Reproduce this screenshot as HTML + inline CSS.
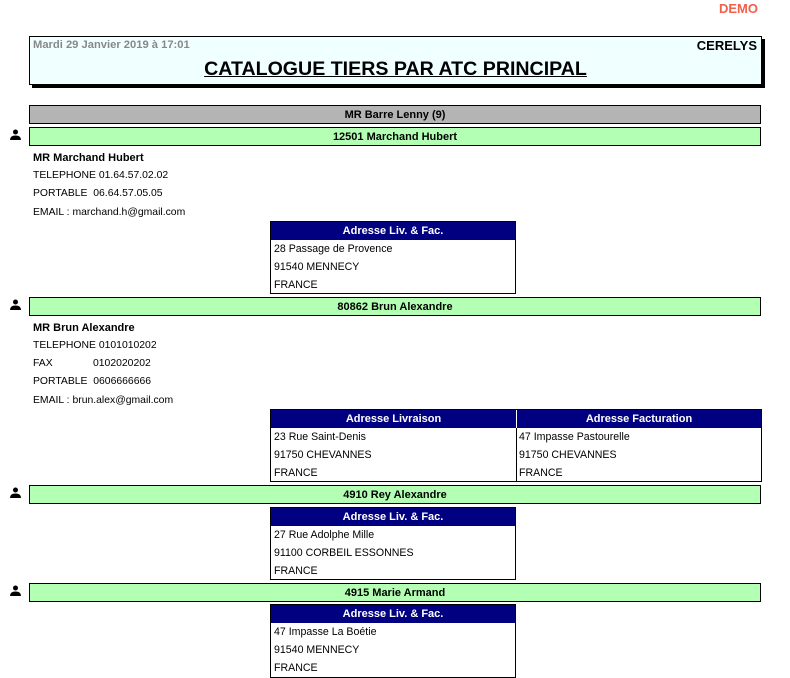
<!DOCTYPE html>
<html><head><meta charset="utf-8"><style>
body{margin:0;width:790px;height:678px;background:#fff;font-family:"Liberation Sans",Arial,sans-serif;position:relative;overflow:hidden}
div{position:absolute;box-sizing:border-box}
.t{font-size:11px;color:#000;white-space:nowrap}
.s{font-size:10.4px}
.bar{left:29px;width:732px;height:19px;border:1px solid #000;font-weight:bold;font-size:11px;text-align:center;line-height:19px}
.g{background:#b3ffb3}
.box{border:1px solid #000;background:#fff}
.hd{background:#000080;color:#fff;font-weight:bold;font-size:11px;text-align:center;height:18px;line-height:19px;position:absolute;top:0}
.ln{font-size:10.6px;position:absolute;left:3px;white-space:nowrap}
</style></head><body>
<div style="left:719px;top:1px;color:#f0604a;font-weight:bold;font-size:13px">DEMO</div>
<div style="left:29px;top:36px;width:733px;height:49px;background:#f0ffff;border:1px solid #000;box-shadow:3px 3px 0 #000"></div>
<div class="t" style="left:33px;top:39px;color:#888;font-weight:bold;font-size:11.2px">Mardi 29 Janvier 2019 à 17:01</div>
<div class="t" style="left:690px;top:38px;font-weight:bold;font-size:13px;width:67px;text-align:right">CERELYS</div>
<div style="left:29px;top:58px;width:733px;text-align:center;font-weight:bold;font-size:19.6px;text-decoration:underline">CATALOGUE TIERS PAR ATC PRINCIPAL</div>

<div class="bar" style="top:105px;background:#b4b4b4">MR Barre Lenny (9)</div>

<svg style="position:absolute;left:10px;top:129px" width="11" height="11" viewBox="0 0 11 11"><circle cx="5.5" cy="3" r="2.5"/><path d="M0 11 Q0 6.5 5.5 6.5 Q11 6.5 11 11Z"/></svg>
<div class="bar g" style="top:127px">12501 Marchand Hubert</div>
<div class="t" style="left:33px;top:152px;font-weight:bold">MR Marchand Hubert</div>
<div class="t s" style="left:33px;top:170px">TELEPHONE 01.64.57.02.02</div>
<div class="t s" style="left:33px;top:188px">PORTABLE&nbsp; 06.64.57.05.05</div>
<div class="t s" style="left:33px;top:207px">EMAIL : marchand.h@gmail.com</div>
<div class="box" style="left:270px;top:221px;width:246px;height:73px"><div class="hd" style="left:0;width:244px">Adresse Liv. &amp; Fac.</div>
<div class="ln" style="top:21px">28 Passage de Provence</div><div class="ln" style="top:39px">91540 MENNECY</div><div class="ln" style="top:57px">FRANCE</div></div>

<svg style="position:absolute;left:10px;top:299px" width="11" height="11" viewBox="0 0 11 11"><circle cx="5.5" cy="3" r="2.5"/><path d="M0 11 Q0 6.5 5.5 6.5 Q11 6.5 11 11Z"/></svg>
<div class="bar g" style="top:297px">80862 Brun Alexandre</div>
<div class="t" style="left:33px;top:322px;font-weight:bold">MR Brun Alexandre</div>
<div class="t s" style="left:33px;top:340px">TELEPHONE 0101010202</div>
<div class="t s" style="left:33px;top:358px">FAX</div><div class="t s" style="left:93px;top:358px">0102020202</div>
<div class="t s" style="left:33px;top:376px">PORTABLE&nbsp; 0606666666</div>
<div class="t s" style="left:33px;top:395px">EMAIL : brun.alex@gmail.com</div>
<div class="box" style="left:270px;top:409px;width:492px;height:73px"><div class="hd" style="left:0;width:245px">Adresse Livraison</div><div class="hd" style="left:245px;width:245px;border-left:1px solid #fff">Adresse Facturation</div>
<div style="left:245px;top:18px;width:1px;height:53px;background:#000"></div>
<div class="ln" style="top:21px">23 Rue Saint-Denis</div><div class="ln" style="top:39px">91750 CHEVANNES</div><div class="ln" style="top:57px">FRANCE</div>
<div class="ln" style="top:21px;left:248px">47 Impasse Pastourelle</div><div class="ln" style="top:39px;left:248px">91750 CHEVANNES</div><div class="ln" style="top:57px;left:248px">FRANCE</div></div>

<svg style="position:absolute;left:10px;top:487px" width="11" height="11" viewBox="0 0 11 11"><circle cx="5.5" cy="3" r="2.5"/><path d="M0 11 Q0 6.5 5.5 6.5 Q11 6.5 11 11Z"/></svg>
<div class="bar g" style="top:485px">4910 Rey Alexandre</div>
<div class="box" style="left:270px;top:507px;width:246px;height:73px"><div class="hd" style="left:0;width:244px">Adresse Liv. &amp; Fac.</div>
<div class="ln" style="top:21px">27 Rue Adolphe Mille</div><div class="ln" style="top:39px">91100 CORBEIL ESSONNES</div><div class="ln" style="top:57px">FRANCE</div></div>

<svg style="position:absolute;left:10px;top:585px" width="11" height="11" viewBox="0 0 11 11"><circle cx="5.5" cy="3" r="2.5"/><path d="M0 11 Q0 6.5 5.5 6.5 Q11 6.5 11 11Z"/></svg>
<div class="bar g" style="top:583px">4915 Marie Armand</div>
<div class="box" style="left:270px;top:604px;width:246px;height:74px"><div class="hd" style="left:0;width:244px">Adresse Liv. &amp; Fac.</div>
<div class="ln" style="top:21px">47 Impasse La Boétie</div><div class="ln" style="top:39px">91540 MENNECY</div><div class="ln" style="top:57px">FRANCE</div></div>
</body></html>
